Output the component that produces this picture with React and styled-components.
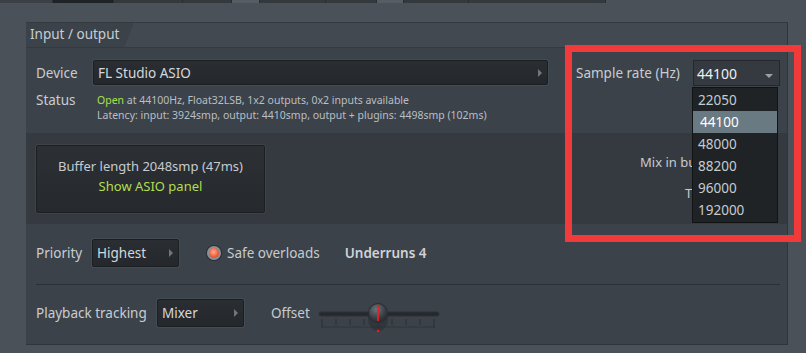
import React from 'react'
import styled, { createGlobalStyle } from 'styled-components'

const GlobalStyle = createGlobalStyle`
  html, body { margin: 0; padding: 0; }
  body {
    background: #4b5159;
    font-family: "Noto Sans", "Open Sans", sans-serif;
    -webkit-font-smoothing: antialiased;
  }
`

const strip = [
  [53, '#3b4046'], [61, '#1f2327'], [69, '#34393e'], [49, '#34393e'], [28, '#565d65'],
  [66, '#34393e'], [51, '#34393e'], [27, '#565d65'], [65, '#34393e'], [137, '#34393e'],
]

const rates = ['22050', '44100', '48000', '88200', '96000', '192000']

function App() {
  return (
    <>
      <GlobalStyle />
      <Page>
        <TopStrip>
          {strip.map(([w, c], i) => <StripTab key={i} $w={w} $c={c} />)}
        </TopStrip>
        <Panel>
          <TabRow>
            <Tab>Input / output</Tab>
          </TabRow>
          <TopSection>
            <DeviceCol>
              <Row>
                <Label $w={57}>Device</Label>
                <Select $w={455} $h={25}>
                  <span>FL Studio ASIO</span>
                  <ArrowRight />
                </Select>
              </Row>
              <StatusRow>
                <Label $w={61}>Status</Label>
                <StatusText>
                  <div><Green>Open</Green> at 44100Hz, Float32LSB, 1x2 outputs, 0x2 inputs available</div>
                  <div>Latency: input: 3924smp, output: 4410smp, output + plugins: 4498smp (102ms)</div>
                </StatusText>
              </StatusRow>
            </DeviceCol>
            <RateCol>
              <Label $w={117}>Sample rate (Hz)</Label>
              <RateSelect>
                <span>44100</span>
                <ArrowDown />
              </RateSelect>
            </RateCol>
          </TopSection>
          <Band>
            <BufferButton>
              <div>Buffer length 2048smp (47ms)</div>
              <GreenLink>Show ASIO panel</GreenLink>
            </BufferButton>
            <Options>
              <Option>Mix in buffer switch</Option>
              <Option $indent>Triple buffer</Option>
            </Options>
          </Band>
          <Row $pad="15px 0 0 10px">
            <Label $w={56}>Priority</Label>
            <Select $w={87} $h={28}>
              <span>Highest</span>
              <ArrowRight />
            </Select>
            <Radio />
            <Text>Safe overloads</Text>
            <Strong>Underruns 4</Strong>
          </Row>
          <Separator />
          <Row $pad="6px 0 0 10px">
            <Label $w={121}>Playback tracking</Label>
            <Select $w={87} $h={28}>
              <span>Mixer</span>
              <ArrowRight />
            </Select>
            <Text $ml={27}>Offset</Text>
            <Slider>
              <svg width="124" height="32" viewBox="0 0 124 32">
                <rect x="1" y="9" width="120" height="4" rx="2" fill="#25292d" stroke="#2e3237" />
                {[4, 18, 32, 46, 60, 74, 88, 102, 116].map((x, i) => (
                  <line key={i} x1={x} y1="16" x2={x} y2={i % 4 === 0 ? 25 : 22} stroke="#2a2e33" strokeWidth="1" />
                ))}
                <line x1="4" y1="24" x2="116" y2="24" stroke="#30343a" />
                <ellipse cx="60" cy="16" rx="10" ry="12" fill="#2a2e33" opacity="0.6" />
                <circle cx="60" cy="10" r="10" fill="#2a2e33" />
                <circle cx="60" cy="10" r="9" fill="url(#knob)" />
                <line x1="60" y1="3" x2="60" y2="18" stroke="#ff1a1a" strokeWidth="1.6" />
                <circle cx="60" cy="28" r="1.2" fill="#ff1a1a" />
                <defs>
                  <radialGradient id="knob" cx="0.4" cy="0.3" r="0.8">
                    <stop offset="0" stopColor="#6c737b" />
                    <stop offset="0.6" stopColor="#3a4046" />
                    <stop offset="1" stopColor="#23272b" />
                  </radialGradient>
                </defs>
              </svg>
            </Slider>
          </Row>
        </Panel>
        <RateList>
          {rates.map((r) => <RateItem key={r} $active={r === '44100'}>{r}</RateItem>)}
        </RateList>
        <Highlight />
      </Page>
    </>
  )
}

export default App

const Page = styled.div`
  position: relative;
  width: 806px;
  height: 353px;
  overflow: hidden;
  background: #4b5159;
  color: #c6cbd0;
  font-size: 13px;
`

const TopStrip = styled.div`
  display: flex;
  height: 3px;
`

const StripTab = styled.div`
  width: ${(p) => p.$w}px;
  background: ${(p) => p.$c};
  border-right: 1px solid #2a2e33;
  box-sizing: border-box;
`

const Panel = styled.div`
  margin: 19px 0 0 26px;
  width: 762px;
  height: 323px;
  box-sizing: border-box;
  background: #3c4249;
  border-right: 1px solid #30353b;
  border-bottom: 1px solid #30353b;
  border-top: 1px solid #353a40;
`

const TabRow = styled.div`
  height: 24px;
  background: #434950;
  border-bottom: 1px solid #353a40;
  display: flex;
`

const Tab = styled.div`
  width: 108px;
  height: 24px;
  padding-left: 4px;
  box-sizing: border-box;
  background: #3c4249;
  clip-path: polygon(0 0, 100% 0, 91% 100%, 0 100%);
  line-height: 22px;
  font-size: 13.5px;
  color: #c8cdd2;
`

const TopSection = styled.div`
  display: flex;
  height: 85px;
`

const DeviceCol = styled.div`
  display: flex;
  flex-direction: column;
  padding: 12px 0 0 10px;
  width: 540px;
`

const Row = styled.div`
  display: flex;
  align-items: center;
  padding: ${(p) => p.$pad || 0};
`

const StatusRow = styled.div`
  display: flex;
  align-items: flex-start;
  margin-top: 6px;
`

const Label = styled.div`
  width: ${(p) => p.$w}px;
  flex: none;
  font-size: 13.5px;
  color: #c8cdd2;
`

const StatusText = styled.div`
  font-size: 10.5px;
  line-height: 15px;
  color: #b9bfc5;
  padding-top: 2px;
`

const Green = styled.span`
  color: #a6e04a;
`

const Select = styled.div`
  position: relative;
  display: flex;
  align-items: center;
  width: ${(p) => p.$w}px;
  height: ${(p) => p.$h}px;
  box-sizing: border-box;
  padding-left: 4px;
  background: linear-gradient(#2a2e33, #24282c);
  border: 1px solid #1c1f22;
  border-radius: 2px;
  box-shadow: 0 0 0 1px #454b52;
  color: #d4d8dc;
  font-size: 13.5px;
`

const ArrowRight = styled.i`
  position: absolute;
  right: 5px;
  top: 50%;
  margin-top: -4px;
  border-left: 4px solid #6f767d;
  border-top: 4px solid transparent;
  border-bottom: 4px solid transparent;
`

const ArrowDown = styled.i`
  position: absolute;
  right: 6px;
  top: 13px;
  border-top: 4px solid #9aa1a8;
  border-left: 4px solid transparent;
  border-right: 4px solid transparent;
`

const RateCol = styled.div`
  display: flex;
  align-items: center;
  height: 26px;
  margin-top: 12px;
`

const RateSelect = styled.div`
  position: relative;
  width: 87px;
  height: 26px;
  box-sizing: border-box;
  padding: 3px 0 0 3px;
  background: #353a40;
  border: 1px solid #24282c;
  color: #eef0f2;
  font-size: 14px;
`

const Band = styled.div`
  display: flex;
  height: 91px;
  background: #353a41;
  padding: 12px 0 0 10px;
  box-sizing: border-box;
`

const BufferButton = styled.div`
  width: 229px;
  height: 68px;
  box-sizing: border-box;
  background: linear-gradient(#2c3035, #26292d);
  border: 1px solid #1d2023;
  border-radius: 2px;
  box-shadow: 0 0 0 1px #3d4349;
  display: flex;
  flex-direction: column;
  align-items: center;
  justify-content: center;
  font-size: 13px;
  line-height: 20px;
  color: #c6cbd0;
  padding-bottom: 6px;
`

const GreenLink = styled.div`
  color: #b2df4e;
`

const Options = styled.div`
  margin-left: auto;
  padding: 2px 0 0;
  width: 147px;
  line-height: 31px;
`

const Option = styled.div`
  padding-left: ${(p) => (p.$indent ? 45 : 0)}px;
  color: #c6cbd0;
  font-size: 13px;
`

const Radio = styled.span`
  width: 14px;
  height: 14px;
  margin-left: 28px;
  border-radius: 50%;
  box-sizing: border-box;
  border: 2px solid #8a9097;
  background: radial-gradient(circle at 45% 40%, #ffb090 0%, #f06040 55%, #c03a22 100%);
  box-shadow: 0 0 0 1px #2a2e33;
`

const Text = styled.span`
  margin-left: ${(p) => (p.$ml != null ? p.$ml : 6)}px;
  font-size: 13.5px;
  color: #c6cbd0;
`

const Strong = styled.span`
  margin-left: 25px;
  font-size: 13.5px;
  font-weight: 600;
  color: #d0d4d8;
`

const Separator = styled.div`
  margin: 17px 7px 0 10px;
  border-top: 1px solid #2c3136;
`

const Slider = styled.div`
  margin: 12px 0 0 8px;
  height: 32px;
`

const RateList = styled.div`
  position: absolute;
  left: 692px;
  top: 87px;
  width: 86px;
  height: 136px;
  box-sizing: border-box;
  background: #1f2326;
  border: 1px solid #111315;
  padding-top: 1px;
`

const RateItem = styled.div`
  height: 22px;
  line-height: 22px;
  padding-left: ${(p) => (p.$active ? 7 : 5)}px;
  font-size: 13.5px;
  color: ${(p) => (p.$active ? '#ffffff' : '#c6cbd0')};
  background: ${(p) => (p.$active ? '#697a83' : 'transparent')};
`

const Highlight = styled.div`
  position: absolute;
  left: 565px;
  top: 45px;
  width: 236px;
  height: 197px;
  box-sizing: border-box;
  border: 7px solid #f23a3a;
  pointer-events: none;
`
